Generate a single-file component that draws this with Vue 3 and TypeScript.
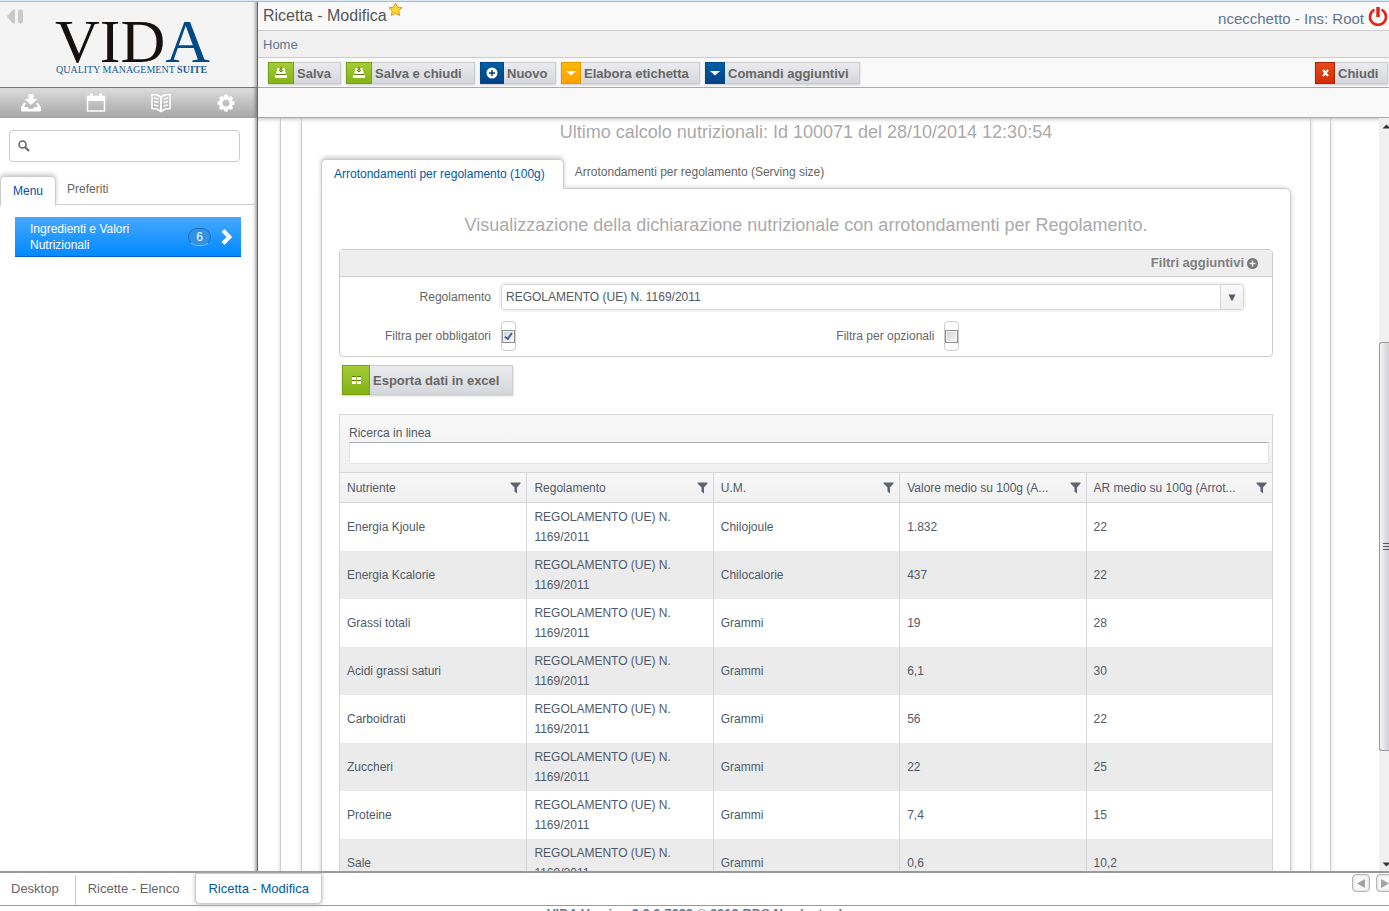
<script setup lang="ts">
import { ref } from 'vue'

interface Command {
  label: string
  icon: 'save' | 'plus' | 'caret'
  tone: 'green' | 'blue' | 'orange'
  size: string
}

interface Nutrient {
  name: string
  rule: string
  unit: string
  average: string
  reference: string
}

const commands: Command[] = [
  { label: 'Salva', icon: 'save', tone: 'green', size: 'xs' },
  { label: 'Salva e chiudi', icon: 'save', tone: 'green', size: 'md' },
  { label: 'Nuovo', icon: 'plus', tone: 'blue', size: 'sm' },
  { label: 'Elabora etichetta', icon: 'caret', tone: 'orange', size: 'lg' },
  { label: 'Comandi aggiuntivi', icon: 'caret', tone: 'blue', size: 'xl' },
]

const columns: string[] = [
  'Nutriente',
  'Regolamento',
  'U.M.',
  'Valore medio su 100g (A...',
  'AR medio su 100g (Arrot...',
]

const rule = 'REGOLAMENTO (UE) N. 1169/2011'
const nutrients: Nutrient[] = [
  { name: 'Energia Kjoule', rule, unit: 'Chilojoule', average: '1.832', reference: '22' },
  { name: 'Energia Kcalorie', rule, unit: 'Chilocalorie', average: '437', reference: '22' },
  { name: 'Grassi totali', rule, unit: 'Grammi', average: '19', reference: '28' },
  { name: 'Acidi grassi saturi', rule, unit: 'Grammi', average: '6,1', reference: '30' },
  { name: 'Carboidrati', rule, unit: 'Grammi', average: '56', reference: '22' },
  { name: 'Zuccheri', rule, unit: 'Grammi', average: '22', reference: '25' },
  { name: 'Proteine', rule, unit: 'Grammi', average: '7,4', reference: '15' },
  { name: 'Sale', rule, unit: 'Grammi', average: '0,6', reference: '10,2' },
]

const menuSearch = ref('')
const inlineSearch = ref('')
const selectedRule = ref(rule)
const onlyMandatory = ref(true)
const onlyOptional = ref(false)
</script>

<template>
  <div class="app">
    <div class="window-edge"></div>
    <div class="workspace">
      <aside class="sidebar">
        <div class="brand">
          <button class="collapse" type="button" aria-label="Riduci">
            <svg width="17" height="15" viewBox="0 0 17 15">
              <path d="M8 0.5v14H6L0.500 8.500v-2L6 0.500z" fill="#c9c9c9" />
              <rect x="11" y="0.500" width="5" height="14" rx="2" fill="#c9c9c9" />
            </svg>
          </button>
          <svg class="logo" width="166" height="78" viewBox="0 0 166 78" role="img" aria-label="VIDA Quality Management Suite">
            <text x="3" y="60" fill="#14110e" font-family="'Liberation Serif', serif" font-size="62">VID<tspan fill="#004b87">A</tspan></text>
            <text x="4" y="71" fill="#1c5a94" font-family="'Liberation Serif', serif" font-size="10">QUALITY MANAGEMENT <tspan font-weight="bold">SUITE</tspan></text>
          </svg>
        </div>
        <nav class="shortcuts">
          <button type="button" aria-label="Scarica">
            <svg width="22" height="20" viewBox="0 0 22 20" fill="#fff">
              <path d="M8.500 1h5v5h4L11 12 4.500 6h4z" />
              <path d="M4 10 1 14v3.500q0 1 1 1h18q1 0 1-1V14l-3-4h-2l2 4h-3.500q-.8 2-3.500 2T7.500 14H4l2-4z" />
            </svg>
          </button>
          <button type="button" aria-label="Calendario">
            <svg width="20" height="20" viewBox="0 0 20 20">
              <path d="M1.500 3.500h17v14.500h-17z" fill="none" stroke="#fff" stroke-width="1.500" />
              <path d="M1 3h18v5H1z M4 0.500h3v4H4z M13 0.500h3v4h-3z" fill="#fff" />
            </svg>
          </button>
          <button type="button" aria-label="Libro">
            <svg width="20" height="20" viewBox="0 0 20 20" fill="none" stroke="#fff">
              <path d="M10 4 6.500 2 1 1.500v14l5 .5 4 2.500 4-2.500 5-.5v-14L13.500 2z" stroke-width="1.500" />
              <path d="M10 4v14" stroke-width="2" />
              <path d="M3 5l4.500 1M3 8.500l4.500 1M3 12l4.500 1M17 5l-4.500 1M17 8.500l-4.500 1M17 12l-4.500 1" stroke-width="1.500" />
            </svg>
          </button>
          <button type="button" aria-label="Impostazioni">
            <svg width="20" height="20" viewBox="0 0 20 20">
              <circle cx="10" cy="10" r="5.200" fill="none" stroke="#fff" stroke-width="3.600" />
              <path d="M10 1.500v17M1.500 10h17M4 4l12 12M16 4 4 16" stroke="#fff" stroke-width="3.600" stroke-dasharray="3 11 3" />
            </svg>
          </button>
        </nav>
        <label class="menu-search">
          <svg width="12" height="12" viewBox="0 0 12 12" fill="none" stroke="#666">
            <circle cx="4.500" cy="4.500" r="3.500" stroke-width="1.600" />
            <path d="M7 7l4 4" stroke-width="2.200" />
          </svg>
          <input v-model="menuSearch" type="text" aria-label="Cerca nel menu" />
        </label>
        <div class="side-tabs">
          <button class="side-tab is-active" type="button">Menu</button>
          <button class="side-tab" type="button">Preferiti</button>
        </div>
        <a class="menu-item" href="#">
          <span class="menu-text">Ingredienti e Valori Nutrizionali</span>
          <span class="count">6</span>
          <svg width="12" height="16" viewBox="0 0 12 16" fill="none" stroke="#fff" stroke-width="4">
            <path d="M2 1.500 8.500 8 2 14.500" />
          </svg>
        </a>
      </aside>

      <main class="main">
        <header class="titlebar">
          <h1>Ricetta - Modifica</h1>
          <svg class="star" width="15" height="15" viewBox="0 0 15 15">
            <path d="M7.500 1 9.500 5.300 14 5.800 10.700 9 11.700 13.500 7.500 11.300 3.300 13.500 4.300 9 1 5.800 5.500 5.300z" fill="#ffd92e" stroke="#e8931c" stroke-linejoin="round" />
          </svg>
          <span class="user">ncecchetto - Ins: Root</span>
          <button class="power" type="button" aria-label="Esci">
            <svg width="20" height="21" viewBox="0 0 20 21" fill="none" stroke="#e32219">
              <path d="M5.500 4.200a8 8 0 1 0 9 0" stroke-width="2.600" stroke-linecap="round" />
              <path d="M10 1v10" stroke-width="3.400" />
            </svg>
          </button>
        </header>
        <nav class="crumbs"><a href="#">Home</a></nav>
        <div class="commands">
          <button v-for="c in commands" :key="c.label" class="cmd" :class="'w-' + c.size" type="button">
            <span class="cmd-icon" :class="[c.tone, c.icon]">
              <svg v-if="c.icon === 'save'" width="14" height="12" viewBox="0 0 14 12">
                <path d="M3.500 1h2v2.500h3V1h2l1.500 6.500H2z M1 8h12v3H1z" fill="#fff" />
                <path d="M7 0v3.500M5 3l2 2 2-2M2 7.500h10" fill="none" stroke="#527d0a" />
              </svg>
              <svg v-else-if="c.icon === 'plus'" width="12" height="12" viewBox="0 0 12 12">
                <circle cx="6" cy="6" r="5.500" fill="#fff" />
                <path d="M6 3v6M3 6h6" stroke="#003f7e" stroke-width="1.500" />
              </svg>
              <svg v-else width="10" height="5" viewBox="0 0 10 5"><path d="M0 0h10L5 4.500z" fill="#fff" /></svg>
            </span>
            <span class="cmd-text">{{ c.label }}</span>
          </button>
          <button class="cmd w-xs close" type="button">
            <span class="cmd-icon red">
              <svg width="7" height="8" viewBox="0 0 7 8"><path d="M1 1l5 6M6 1 1 7" stroke="#fff" stroke-width="2" /></svg>
            </span>
            <span class="cmd-text">Chiudi</span>
          </button>
        </div>
        <div class="subbar"></div>

        <div class="viewport">
          <div class="outer-panel">
            <div class="inner-panel">
              <h2>Ultimo calcolo nutrizionali: Id 100071 del 28/10/2014 12:30:54</h2>
              <div class="tabs">
                <button class="tab is-active" type="button">Arrotondamenti per regolamento (100g)</button>
                <button class="tab" type="button">Arrotondamenti per regolamento (Serving size)</button>
              </div>
              <section class="tab-panel">
                <h2>Visualizzazione della dichiarazione nutrizionale con arrotondamenti per Regolamento.</h2>
                <div class="filters">
                  <div class="filters-head">
                    <button type="button">
                      Filtri aggiuntivi
                      <svg width="11" height="11" viewBox="0 0 11 11">
                        <circle cx="5.500" cy="5.500" r="5.500" fill="#777" />
                        <path d="M5.500 2.500v6M2.500 5.500h6" stroke="#eee" stroke-width="1.600" />
                      </svg>
                    </button>
                  </div>
                  <div class="filters-body">
                    <label for="rule">Regolamento</label>
                    <div class="select">
                      <select id="rule" v-model="selectedRule">
                        <option>{{ rule }}</option>
                      </select>
                      <span class="select-arrow">
                        <svg width="8" height="7" viewBox="0 0 8 7"><path d="M0.500 0.500h7L4.500 6.500h-1z" fill="#515967" /></svg>
                      </span>
                    </div>
                    <label for="mandatory">Filtra per obbligatori</label>
                    <span class="check"><input id="mandatory" v-model="onlyMandatory" type="checkbox" /></span>
                    <label for="optional">Filtra per opzionali</label>
                    <span class="check"><input id="optional" v-model="onlyOptional" type="checkbox" /></span>
                  </div>
                </div>

                <button class="cmd export" type="button">
                  <span class="cmd-icon green grid">
                    <svg width="9" height="9" viewBox="0 0 9 9">
                      <path d="M0 1h4v3H0zM5 1h4v3H5zM0 5h4v3H0zM5 5h4v3H5z" fill="#fff" />
                      <path d="M0 0.500h4M5 0.500h4M0 4.500h4M5 4.500h4" stroke="#527d0a" />
                    </svg>
                  </span>
                  <span class="cmd-text">Esporta dati in excel</span>
                </button>

                <div class="grid-box">
                  <div class="inline-search">
                    <label for="inline">Ricerca in linea</label>
                    <input id="inline" v-model="inlineSearch" type="text" />
                  </div>
                  <table>
                    <thead>
                      <tr>
                        <th v-for="col in columns" :key="col" scope="col">
                          <div class="th">
                            <span>{{ col }}</span>
                            <svg width="11" height="12" viewBox="0 0 11 12"><path d="M0.500 0.500h10v1L7 5.500v6L4.500 9.500v-4L0.500 1.500z" fill="#5a6472" /></svg>
                          </div>
                        </th>
                      </tr>
                    </thead>
                    <tbody>
                      <tr v-for="n in nutrients" :key="n.name">
                        <td>{{ n.name }}</td>
                        <td>{{ n.rule }}</td>
                        <td>{{ n.unit }}</td>
                        <td>{{ n.average }}</td>
                        <td>{{ n.reference }}</td>
                      </tr>
                    </tbody>
                  </table>
                </div>
              </section>
            </div>
          </div>
          <div class="scrollbar" aria-hidden="true">
            <svg class="arrow" width="14" height="5" viewBox="0 0 14 5"><path d="M3.500 4.500 7.500 0.500l4 4z" fill="#333" /></svg>
            <div class="thumb">
              <svg width="10" height="9" viewBox="0 0 10 9"><path d="M1 1.500h9M1 4.500h9M1 7.500h9" stroke="#555" /></svg>
            </div>
            <svg class="arrow" width="14" height="5" viewBox="0 0 14 5"><path d="M3.500 0.500 7.500 4.500l4-4z" fill="#333" /></svg>
          </div>
        </div>
      </main>
    </div>

    <nav class="taskbar">
      <button class="task" type="button">Desktop</button>
      <button class="task" type="button">Ricette - Elenco</button>
      <button class="task is-active" type="button">Ricetta - Modifica</button>
      <div class="pager">
        <button type="button" aria-label="Precedente">
          <svg width="8" height="9" viewBox="0 0 8 9"><path d="M8 0v9L0 4.500z" fill="#a3a3a3" /></svg>
        </button>
        <button type="button" aria-label="Successivo">
          <svg width="8" height="9" viewBox="0 0 8 9"><path d="M0 0v9l8-4.500z" fill="#a3a3a3" /></svg>
        </button>
      </div>
    </nav>
    <footer class="version">VIDA Version 3.2.0.7699 © 2012 RDS Nordest srl</footer>
  </div>
</template>

<style>
html,
body {
  margin: 0;
  overflow: hidden;
}
</style>

<style scoped>
* {
  box-sizing: border-box;
}
.app {
  display: flex;
  flex-direction: column;
  height: 100vh;
  overflow: hidden;
  background: #fff;
  color: #666;
  font: 12px/16px 'Liberation Sans', Arial, sans-serif;
}
button,
input,
select {
  font: inherit;
  color: inherit;
}
button {
  border: 0;
  padding: 0;
  background: none;
  white-space: nowrap;
}
a {
  color: inherit;
  text-decoration: none;
}
svg {
  display: block;
  flex: none;
}
h1,
h2 {
  margin: 0;
  font-weight: normal;
}
.window-edge {
  flex: none;
  height: 2px;
  background: #d9e9f8;
  border-bottom: 1px solid #a6bdd0;
}
.workspace {
  flex: 1;
  display: flex;
  min-height: 0;
}

/* sidebar */
.sidebar {
  flex: none;
  width: 258px;
  border-right: 1px solid #666;
  box-shadow: inset -4px 0 3px -2px #aaa;
}
.brand {
  display: flex;
  align-items: flex-start;
  height: 86px;
  background: #f4f4f4;
  border-bottom: 1px solid #777;
  box-shadow: inset -4px 0 3px -2px #aaa;
}
.collapse {
  margin: 7px 0 0 7px;
}
.logo {
  margin: 0 0 0 28px;
}
.shortcuts {
  display: flex;
  align-items: center;
  gap: 41px;
  height: 30px;
  padding-left: 19px;
  background: linear-gradient(#dcdcdc, #a6a6a6);
  box-shadow: inset -4px 0 3px -2px #888;
}
.shortcuts button {
  display: flex;
  justify-content: center;
  width: 24px;
}
.menu-search {
  display: flex;
  align-items: center;
  gap: 6px;
  height: 32px;
  margin: 12px 17px 0 9px;
  padding: 0 8px;
  border: 1px solid #ccc;
  border-radius: 4px;
  background: #fff;
}
.menu-search input {
  flex: 1;
  min-width: 0;
  border: 0;
  outline: 0;
}
.side-tabs {
  display: flex;
  align-items: flex-start;
  height: 29px;
  margin: 14px 1px 0 0;
  border-bottom: 1px solid #ccc;
  border-radius: 0 0 4px 0;
}
.side-tab {
  height: 26px;
  padding: 0 11px;
}
.side-tab.is-active {
  height: 30px;
  padding: 0 12px 2px;
  background: #fff;
  border: 1px solid #ccc;
  border-bottom: 0;
  border-radius: 5px 5px 0 0;
  box-shadow: 0 -2px 4px #ccc;
  clip-path: inset(-6px -6px 0 -6px);
  color: #004fa3;
}
.menu-item {
  display: flex;
  align-items: center;
  height: 40px;
  margin: 12px 16px 0 15px;
  padding: 0 8px 0 15px;
  background: linear-gradient(#46a8ff, #0089ff);
  border-bottom: 1px solid #0068c4;
  color: #fff;
}
.menu-text {
  width: 130px;
}
.count {
  width: 23px;
  margin-left: auto;
  margin-right: 10px;
  border: 1px solid #1b6fb5;
  border-bottom-color: #6dbcff;
  border-radius: 9px;
  background: #3193e4;
  text-align: center;
}

/* heading bars */
.main {
  flex: 1;
  display: flex;
  flex-direction: column;
  min-width: 0;
}
.titlebar {
  display: flex;
  height: 29px;
  padding-left: 5px;
  background: #f9f9f9;
  border-bottom: 1px solid #ccc;
}
.titlebar h1 {
  font-size: 16px;
  line-height: 28px;
  color: #555;
}
.star {
  margin-left: 1px;
}
.user {
  margin-left: auto;
  font-size: 15px;
  line-height: 34px;
  color: #5f7591;
}
.power {
  margin: 4px 1px 0 4px;
  align-self: flex-start;
}
.crumbs {
  height: 27px;
  padding-left: 5px;
  background: #f0f0f0;
  border-bottom: 1px solid #ccc;
  font-size: 13px;
  line-height: 28px;
  color: #5f7591;
}
.commands {
  display: flex;
  align-items: flex-start;
  gap: 5px;
  height: 30px;
  padding: 4px 1px 0 10px;
  background: #f9f9f9;
  border-bottom: 1px solid #aaa;
}
.cmd {
  display: flex;
  height: 22px;
  background: linear-gradient(#ececee, #d3d6dc);
  box-shadow: inset 0 0 0 1px #ccc, 0 1px 2px #ccc;
  color: #666;
  font-size: 13px;
  font-weight: bold;
  line-height: 17px;
  text-align: left;
}
.cmd-icon {
  display: flex;
  align-items: center;
  justify-content: center;
  align-self: stretch;
  width: 20px;
}
.cmd-icon.save {
  width: 26px;
}
.cmd-icon.plus {
  width: 24px;
}
.cmd-icon.grid {
  width: 28px;
}
.cmd-text {
  align-self: center;
  padding: 1px 6px 0 3px;
}
.green {
  background: linear-gradient(#a5cd39, #83b214);
  box-shadow: inset 0 0 0 1px #76a012;
}
.blue {
  background: linear-gradient(#0061a8, #003f83);
  box-shadow: inset 0 0 0 1px #004a8c;
}
.orange {
  background: linear-gradient(#ffb900, #ff9f00);
  box-shadow: inset 0 0 0 1px #e09a00;
}
.red {
  background: linear-gradient(#e84c18, #d02b05);
  box-shadow: inset 0 0 0 1px #a42508;
}
.w-xs {
  min-width: 73px;
}
.w-sm {
  min-width: 76px;
}
.w-md {
  min-width: 129px;
}
.w-lg {
  min-width: 139px;
}
.w-xl {
  min-width: 155px;
}
.close {
  margin-left: auto;
}
.subbar {
  height: 30px;
  background: #f9f9f9;
  border-bottom: 1px solid #aaa;
}

/* content */
.viewport {
  flex: 1;
  display: flex;
  min-height: 0;
  overflow: hidden;
  box-shadow: inset 0 4px 4px -3px #bbb;
}
.outer-panel {
  flex: 1;
  align-self: flex-start;
  min-width: 0;
  margin: 0 48px 0 22px;
  padding: 0 19px 0 20px;
  border: solid #ccc;
  border-width: 0 1px;
  box-shadow: 0 0 5px #ddd;
}
.inner-panel {
  padding: 0 19px 30px;
  border: solid #ccc;
  border-width: 0 1px;
  box-shadow: 0 0 5px #ddd;
}
h2 {
  font-size: 18px;
  line-height: 28px;
  color: #aaa;
  text-align: center;
}
.tabs {
  display: flex;
  margin-top: 13px;
}
.tab {
  height: 26px;
  padding: 0 11px;
}
.tab.is-active {
  position: relative;
  height: 30px;
  margin-bottom: -1px;
  padding: 0 18px 2px 12px;
  background: #fff;
  border: 1px solid #ccc;
  border-bottom: 0;
  border-radius: 5px 5px 0 0;
  box-shadow: 0 -2px 4px #ccc;
  clip-path: inset(-6px -6px 0 -6px);
  color: #0058a8;
}
.tab-panel {
  padding: 22px 17px 30px;
  border: 1px solid #ccc;
  border-radius: 0 6px 6px 6px;
  box-shadow: 0 0 5px #ccc;
}
.filters {
  margin-top: 10px;
  border: 1px solid #ccc;
  border-radius: 4px;
}
.filters-head {
  display: flex;
  justify-content: flex-end;
  height: 27px;
  padding-right: 14px;
  background: #eee;
  border-bottom: 1px solid #ccc;
}
.filters-head button {
  display: flex;
  align-items: center;
  gap: 3px;
  font-size: 13px;
  font-weight: bold;
  color: #808080;
}
.filters-body {
  display: grid;
  grid-template-columns: 151px 1fr 151px 1.1fr;
  align-items: center;
  gap: 11px 10px;
  padding: 7px 28px 5px 0;
}
.filters-body label {
  text-align: right;
}
.select {
  grid-column: 2 / -1;
  display: flex;
  position: relative;
  height: 26px;
  border: 1px solid #d5d5d5;
  border-radius: 4px;
  box-shadow: 0 0 0 2px #f4f4f4;
}
.select select {
  flex: 1;
  appearance: none;
  border: 0;
  border-radius: 4px;
  padding: 0 4px;
  background: #fff;
  outline: 0;
  color: #515967;
}
.select-arrow {
  position: absolute;
  top: 0;
  right: 0;
  bottom: 0;
  display: flex;
  align-items: center;
  justify-content: center;
  width: 23px;
  border-left: 1px solid #d5d5d5;
  border-radius: 0 3px 3px 0;
  background: linear-gradient(#fafafa, #f0f0f0);
  pointer-events: none;
}
.check {
  display: flex;
  align-items: center;
  justify-content: center;
  width: 15px;
  height: 30px;
  border: 1px solid #ccc;
  border-radius: 4px;
}
.check input {
  flex: none;
  appearance: none;
  display: grid;
  place-items: center;
  width: 13px;
  height: 13px;
  margin: 0;
  border: 1px solid #8e8f8f;
  background: linear-gradient(135deg, #ccd0d6, #fbfbfb);
  box-shadow: inset 0 0 0 1px #f4f4f4;
}
.check input:checked::before {
  content: '';
  width: 3px;
  height: 7px;
  margin-bottom: 2px;
  border: solid #3c549b;
  border-width: 0 2px 2px 0;
  box-sizing: content-box;
  transform: rotate(35deg) scale(0.9);
}
.export {
  min-width: 171px;
  height: 30px;
  margin: 8px 0 0 3px;
}
.grid-box {
  margin-top: 19px;
  border: 1px solid #d5d5d5;
  color: #515967;
}
.inline-search {
  padding: 10px 3px 8px 9px;
  background: linear-gradient(#f8f8f8, #f0f0f0);
  border-bottom: 1px solid #d5d5d5;
}
.inline-search label {
  display: block;
  height: 17px;
}
.inline-search input {
  display: block;
  width: 100%;
  height: 22px;
  border: 1px solid #e0e3e8;
  border-top-color: #abadb3;
  background: #fff;
  outline: 0;
}
table {
  width: 100%;
  table-layout: fixed;
  border-collapse: separate;
  border-spacing: 0;
  line-height: 20px;
}
th,
td {
  padding: 4px 7px;
  font-weight: normal;
  text-align: left;
}
th + th,
td + td {
  border-left: 1px solid #d5d5d5;
}
th {
  height: 30px;
  padding-right: 5px;
  background: linear-gradient(#f8f8f8, #f0f0f0);
  border-bottom: 1px solid #d5d5d5;
}
.th {
  display: flex;
  align-items: center;
  justify-content: space-between;
  white-space: nowrap;
}
td {
  height: 48px;
}
tbody tr:nth-child(even) {
  background: #ebebeb;
}

/* scroll track cut by the window edge */
.scrollbar {
  flex: none;
  display: flex;
  flex-direction: column;
  width: 10px;
  padding: 6px 0 4px;
  background: #f0f0f0;
  overflow: hidden;
}
.thumb {
  display: flex;
  align-items: center;
  flex: 0 0 55%;
  margin: 213px 0 auto;
  padding-left: 2px;
  border: solid #999;
  border-width: 1px 0 1px 1px;
  border-radius: 3px 0 0 3px;
  background: linear-gradient(90deg, #f5f5f5, #cfcfd3);
}

/* bottom bars */
.taskbar {
  flex: none;
  display: flex;
  height: 35px;
  border-top: 2px solid #999;
  border-bottom: 1px solid #999;
  font-size: 13px;
}
.task {
  padding: 0 16px 2px 12px;
  margin-top: 2px;
}
.task:first-child {
  padding-left: 11px;
  border-right: 1px solid #ccc;
}
.task.is-active {
  height: 31px;
  margin-top: 0;
  padding: 0 12px;
  background: #fff;
  border: 1px solid #ccc;
  border-radius: 0 0 5px 5px;
  box-shadow: 0 1px 4px #bbb;
  color: #0058a8;
}
.pager {
  display: flex;
  gap: 6px;
  width: 37px;
  margin-left: auto;
  padding-top: 1px;
  overflow: hidden;
}
.pager button {
  flex: none;
  display: flex;
  align-items: center;
  justify-content: center;
  width: 18px;
  height: 18px;
  border: 1px solid #b5b5b5;
  border-radius: 4px;
  background: #f8f8f8;
  box-shadow: inset 0 0 3px #ccc;
}
.version {
  flex: none;
  height: 5px;
  overflow: hidden;
  font-size: 13px;
  font-weight: bold;
  line-height: 15px;
  text-align: center;
  color: #64788f;
}
</style>
